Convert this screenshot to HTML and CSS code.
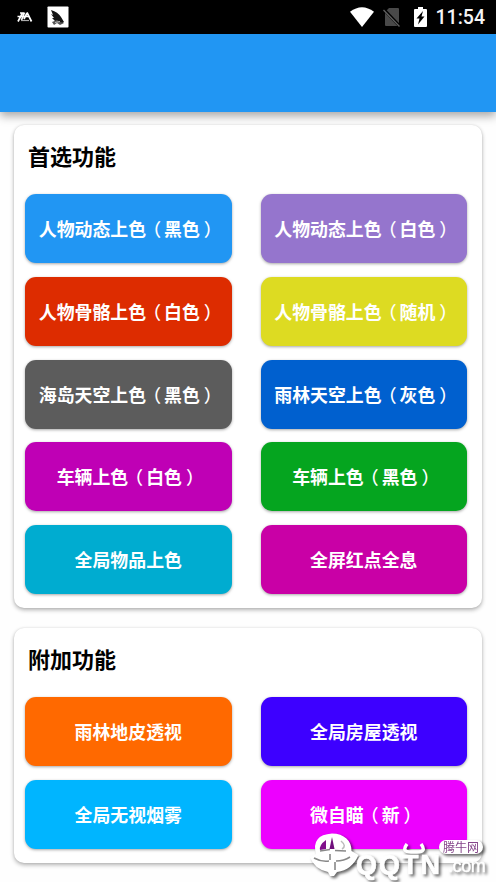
FILE: index.html
```
<!DOCTYPE html>
<html lang="zh-CN">
<head>
    <meta charset="UTF-8">
    <meta name="viewport" content="width=device-width, initial-scale=1.0">
    <title>首选功能</title>
    <link rel="stylesheet" href="styles.css">
</head>
<body>
<div class="status-bar">
    <div class="status-left">
        <svg class="icon-app" width="16" height="12" viewBox="0 0 16 12">
            <path d="M3 2h4M0.5 5.5h11M5.5 2L1 10.5M7.5 1.5L4.5 9M10 1.5l4.5 9M10 2L7 8" fill="none" stroke="#fff" stroke-width="1.7"/>
            <path d="M4 9.5h8" stroke="#aaa" stroke-width="1.2"/>
        </svg>
        <svg class="icon-bird" width="22" height="22" viewBox="0 0 22 22">
            <rect x="0.5" y="0.5" width="21" height="21" rx="0.8" fill="#fff"/>
            <path d="M4 4q7 2 10 7l3 5-3 2-5-2-4-4 2 0-3-4 2 1z" fill="#151515"/>
            <path d="M5 16l5-2 3 2 4 1-4 2-3-2-3 2z" fill="#555"/>
            <path d="M8 16.5l5-1" stroke="#bbb" stroke-width="1"/>
        </svg>
    </div>
    <div class="status-right">
        <svg class="icon-wifi" width="24" height="20" viewBox="0 0 24 20">
            <path d="M0 4.8Q12-4.2 24 4.8L12 20z" fill="#fff"/>
        </svg>
        <svg class="icon-sim" width="18" height="20" viewBox="0 0 18 20">
            <path d="M6 1h9q1 0 1 1v16q0 1-1 1H3q-1 0-1-1V5z" fill="#494949"/>
            <path d="M0 1.5L17 19.5" stroke="#000" stroke-width="3"/>
            <path d="M0.5 3L16.5 19.5" stroke="#606060" stroke-width="1.3"/>
        </svg>
        <svg class="icon-battery" width="13" height="20" viewBox="0 0 13 20">
            <path d="M4 0h5v2h3q1 0 1 1v16q0 1-1 1H1q-1 0-1-1V3q0-1 1-1h3z" fill="#fff"/>
            <path d="M9 4L2.5 11.5h3L4 17.5 10.5 9.5H7.5z" fill="#000"/>
        </svg>
        <span class="clock">11:54</span>
    </div>
</div>

<div class="toolbar"></div>

<div class="content">
    <div class="card">
        <h2 class="card-title">首选功能</h2>
        <div class="button-grid">
            <button class="btn blue">人物动态上色<span class="paren-open">（</span>黑色<span class="paren-close">）</span></button>
            <button class="btn purple">人物动态上色<span class="paren-open">（</span>白色<span class="paren-close">）</span></button>
            <button class="btn red">人物骨骼上色<span class="paren-open">（</span>白色<span class="paren-close">）</span></button>
            <button class="btn yellow">人物骨骼上色<span class="paren-open">（</span>随机<span class="paren-close">）</span></button>
            <button class="btn gray">海岛天空上色<span class="paren-open">（</span>黑色<span class="paren-close">）</span></button>
            <button class="btn navy">雨林天空上色<span class="paren-open">（</span>灰色<span class="paren-close">）</span></button>
            <button class="btn violet">车辆上色<span class="paren-open">（</span>白色<span class="paren-close">）</span></button>
            <button class="btn green">车辆上色<span class="paren-open">（</span>黑色<span class="paren-close">）</span></button>
            <button class="btn teal">全局物品上色</button>
            <button class="btn magenta">全屏红点全息</button>
        </div>
    </div>

    <div class="card">
        <h2 class="card-title">附加功能</h2>
        <div class="button-grid">
            <button class="btn orange">雨林地皮透视</button>
            <button class="btn indigo">全局房屋透视</button>
            <button class="btn sky">全局无视烟雾</button>
            <button class="btn pink">微自瞄<span class="paren-open">（</span>新<span class="paren-close">）</span></button>
        </div>
    </div>
</div>

<!-- 水印 -->
<div class="watermark">
    <svg class="watermark-logo" width="52" height="46" viewBox="0 0 52 46">
        <path d="M24 1.5C36 1.5 44 9 43.5 19l7 4Q44 38 29 40l-3 4h-4l-2-4Q6 37 2 25l6-3Q3 3 24 1.5z" fill="#fff"/>
        <path d="M18 8Q11 13 12 18l6-1z" fill="#80108a"/>
        <path d="M24 5l2.5 12h-5z" fill="#70107c"/>
        <path d="M33 9q6 5 1 8" fill="none" stroke="#bbb" stroke-width="1.5"/>
        <path d="M12 19l10-1.5M27 18.5l11 0.5" fill="none" stroke="#888" stroke-width="1.5"/>
        <path d="M6 26q7 4 15 3M28 29q8 0 14-4M22 22v6M27 30v8" fill="none" stroke="#888" stroke-width="1.6"/>
    </svg>
    <div class="watermark-text">
        <svg class="watermark-horns" width="24" height="13" viewBox="0 0 24 13">
            <path d="M5 1q-6 8 4 8h6q10 0 4-8" fill="none" stroke="#fff" stroke-width="3.5"/>
        </svg>
        <span class="watermark-name">QQTN</span>
        <span class="watermark-com">.com</span>
        <span class="watermark-tag">腾牛网</span>
    </div>
</div>
</body>
</html>
```
FILE: styles.css
```
* {
    margin: 0;
    padding: 0;
    box-sizing: border-box;
}

body {
    font-family: "Noto Sans CJK SC", sans-serif;
    background: #fefefe;
    height: 882px;
    overflow: hidden;
    position: relative;
}

/* 状态栏 */
.status-bar {
    display: flex;
    justify-content: space-between;
    align-items: center;
    height: 34px;
    padding: 0 11px 0 17px;
    background: #000;
}

.status-left,
.status-right {
    display: flex;
    align-items: center;
}

.icon-bird {
    margin-left: 14px;
}

.icon-sim {
    margin-left: 9px;
}

.icon-battery {
    margin-left: 13px;
}

.clock {
    margin-left: 9px;
    padding-top: 1px;
    font: 500 19.5px/34px Roboto, sans-serif;
    color: #f4f4f4;
}

.toolbar {
    position: relative;
    height: 77.5px;
    background: #2196f3;
    box-shadow: 0 4px 9px rgba(0, 0, 0, 0.35);
}

/* 功能卡片 */
.content {
    display: flex;
    flex-direction: column;
    gap: 20.5px;
    padding: 13.5px 14px 0;
}

.card {
    padding: 13px 15px 13.5px 11px;
    background: #fff;
    border-radius: 10px;
    box-shadow: 0 2px 4px rgba(0, 0, 0, 0.3), 0 0 2px rgba(0, 0, 0, 0.1);
}

.card-title {
    padding-left: 3px;
    margin-bottom: 22.3px;
    font-size: 22px;
    line-height: 34px;
    font-weight: 700;
    color: #000;
}

.button-grid {
    display: grid;
    grid-template-columns: repeat(2, 1fr);
    grid-auto-rows: 69px;
    gap: 13.7px 29px;
}

.btn {
    border: none;
    border-radius: 11px;
    padding-bottom: 1px;
    font-family: inherit;
    font-size: 17.9px;
    font-weight: 700;
    color: #fff;
    white-space: nowrap;
    box-shadow: 0 1px 3px rgba(0, 0, 0, 0.35);
}

/* 括号居中显示 */
.paren-open,
.paren-close {
    display: inline-block;
    font-weight: 500;
}

.paren-open {
    transform: translateX(-3px);
}

.paren-close {
    transform: translateX(4px);
}

.blue { background: #2196f3; }
.purple { background: #9575cd; }
.red { background: #dd2c00; }
.yellow { background: #dddb22; }
.gray { background: #5c5c5c; }
.navy { background: #0060cf; }
.violet { background: #bf00b5; }
.green { background: #05a51f; }
.teal { background: #00acd0; }
.magenta { background: #c900a6; }
.orange { background: #ff6900; }
.indigo { background: #3d00ff; }
.sky { background: #00b5ff; }
.pink { background: #ed00ff; }

/* 水印 */
.watermark {
    position: absolute;
    left: 308px;
    top: 832px;
    display: flex;
    filter: drop-shadow(2px 2px 1.5px rgba(0, 0, 0, 0.6));
}

.watermark-text {
    position: relative;
    display: flex;
    align-items: flex-start;
    padding-top: 23px;
    height: 48px;
    margin-left: -4px;
    color: #fff;
    white-space: nowrap;
}

.watermark-name {
    width: 92px;
    font: 700 27px/20px "Liberation Sans", sans-serif;
    letter-spacing: 2px;
    -webkit-text-stroke: 0.7px #fff;
}

.watermark-com {
    padding-top: 2px;
    font: 400 18px/18px "Liberation Sans", sans-serif;
    letter-spacing: -0.4px;
    -webkit-text-stroke: 0.4px #fff;
}

.watermark-horns {
    position: absolute;
    left: 46px;
    top: 11px;
}

.watermark-tag {
    position: absolute;
    left: 83px;
    top: 8px;
    width: 44px;
    border-radius: 7px;
    background: #fff;
    font-size: 12px;
    line-height: 14px;
    text-align: center;
    color: #85458a;
}
```
